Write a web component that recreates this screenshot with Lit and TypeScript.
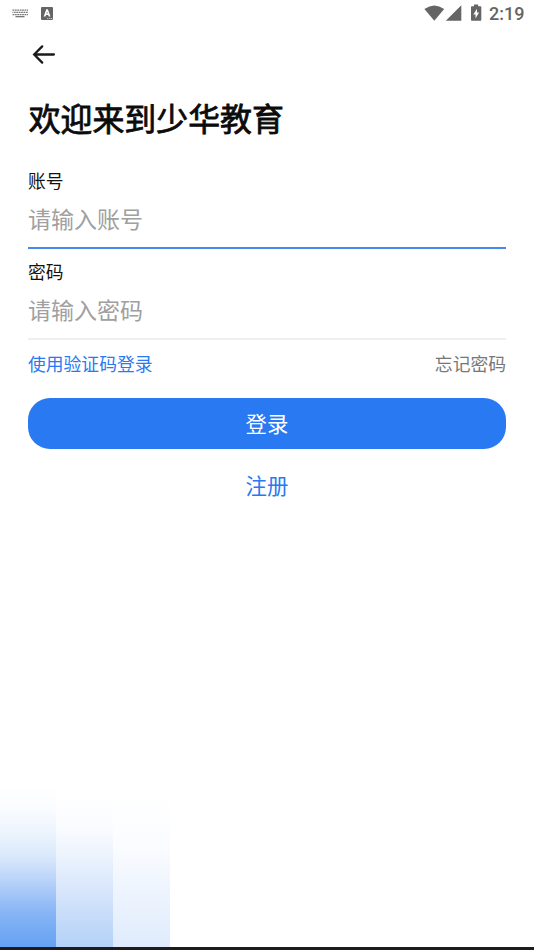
import { LitElement, html, css } from "lit";
import { customElement, property } from "lit/decorators.js";

@customElement("status-bar")
class StatusBar extends LitElement {
  static styles = css`
    :host { display: flex; height: 28px; justify-content: space-between; color: #656565; }
    .left { display: flex; padding-left: 12px; gap: 12px; }
    .right { display: flex; }
    svg { display: block; fill: #656565; }
    .time {
      width: 45px;
      font: 500 18px/28px Roboto, sans-serif;
      white-space: nowrap;
    }
  `;
  render() {
    return html`
      <div class="left">
        <svg width="17" height="28" viewBox="0 0 17 28">
          <g fill="none" stroke="#777" stroke-width="1.2">
            <path d="M0.5 10.2H16" stroke-dasharray="1.8 .6" />
            <path d="M0.5 12.4H16" stroke-dasharray="1.8 .6" stroke-dashoffset="1" />
            <path d="M0.5 14.6H16" stroke-dasharray="1.8 .6" />
          </g>
          <path d="M3.5 16h9v1.3h-9z" fill="#777" />
        </svg>
        <svg width="13" height="28" viewBox="0 0 13 28">
          <rect x="0" y="7" width="12" height="13" rx="1" />
          <path fill="#fff" fill-rule="evenodd" d="M2.7 16.4L5.3 9.2H6.9L9.5 16.4H7.7L7.2 15H5L4.5 16.4zM5.5 13.5H6.7L6.1 11.5z" />
          <path d="M6.3 18.5h1M8.3 18.5h1M10.2 18.5h1" stroke="#ddd" stroke-width="1" />
        </svg>
      </div>
      <div class="right">
        <svg width="65" height="28" viewBox="424 0 65 28">
          <path d="M424.4 9Q434.3 2 444.2 9L434.3 20.7Z" />
          <path d="M461.3 5.2V20.7H445.8Z" />
          <path fill-rule="evenodd" d="M474 4.6h4.2v1.6h2.2q.9 0 .9.9v12.7q0 .9-.9.9h-8.5q-.9 0-.9-.9V7.1q0-.9.9-.9h2.1zM477 8.8l-3.6 5.6h2.1v4l3.6-5.8H477z" />
        </svg>
        <span class="time">2:19</span>
      </div>
    `;
  }
}

@customElement("form-field")
class FormField extends LitElement {
  @property() label = "";
  @property() hint = "";
  @property({ type: Boolean, reflect: true }) active = false;
  static styles = css`
    :host {
      display: block;
      box-sizing: border-box;
      height: 91px;
      padding-top: 9px;
      border-bottom: 2px solid #efefef;
    }
    :host([active]) { border-bottom-color: #468af0; }
    .label { font-size: 17.8px; line-height: 26px; color: #111; }
    .hint { font-size: 23px; line-height: 34px; margin-top: 8px; color: #a0a0a0; }
  `;
  render() {
    return html`
      <div class="label">${this.label}</div>
      <div class="hint">${this.hint}</div>
    `;
  }
}

@customElement("app-root")
class AppRoot extends LitElement {
  static styles = css`
    :host {
      display: flex;
      flex-direction: column;
      height: 950px;
      background: #fff;
      overflow: hidden;
      font-family: "Noto Sans CJK SC", sans-serif;
    }
    .nav { height: 52px; padding-left: 32px; display: flex; align-items: center; }
    .back { display: block; fill: none; stroke: #1b1b1b; stroke-width: 2.3; stroke-linecap: round; }
    main { padding: 0 28px; display: flex; flex-direction: column; }
    h1 {
      margin: 13px 0 0;
      padding-left: 0.7px;
      font-size: 31.9px;
      line-height: 48px;
      font-weight: 400;
      -webkit-text-stroke: 0.8px #0b0b0b;
      color: #0b0b0b;
    }
    .fields { margin-top: 17px; }
    .links {
      display: flex;
      justify-content: space-between;
      margin-top: 10px;
      font-size: 17.8px;
      line-height: 26px;
      color: #777;
    }
    .blue { color: #2979f2; }
    .login, .register { text-align: center; font-size: 21.4px; }
    .login {
      margin-top: 22px;
      height: 51px;
      line-height: 50px;
      border-radius: 22px;
      background: #2979f2;
      color: #fff;
    }
    .register { margin-top: 20px; line-height: 32px; }
    .bars { margin-top: auto; display: flex; height: 167px; }
    .bar { width: 57px; }
    .b1 {
      width: 56px;
      background: linear-gradient(#fff 4%, #fafcff 17%, #ebf3fd 33%, #d9e8fb 46%, #b9d3f9 60%, #86b4f5 80%, #65a2f3 100%);
    }
    .b2 { background: linear-gradient(#fff 8%, #fbfcff 27%, #edf4fd 44%, #d8e6fc 66%, #c3daf9 85%, #b3d2f8 100%); }
    .b3 { background: linear-gradient(#fff 10%, #fafcff 40%, #edf4fe 68%, #dfebfc 100%); }
    .edge { height: 3px; background: #1e1b1f; }
  `;
  render() {
    return html`
      <status-bar></status-bar>
      <div class="nav">
        <svg class="back" width="24" height="24" viewBox="0 0 24 24">
          <path d="M21.9 12.5H2.2M10.2 4.4L2.2 12.5L10.2 20.6" />
        </svg>
      </div>
      <main>
        <h1>欢迎来到少华教育</h1>
        <div class="fields">
          <form-field active label="账号" hint="请输入账号"></form-field>
          <form-field label="密码" hint="请输入密码"></form-field>
        </div>
        <div class="links"><span class="blue">使用验证码登录</span><span>忘记密码</span></div>
        <div class="login">登录</div>
        <div class="register blue">注册</div>
      </main>
      <div class="bars">
        <div class="bar b1"></div>
        <div class="bar b2"></div>
        <div class="bar b3"></div>
      </div>
      <div class="edge"></div>
    `;
  }
}
